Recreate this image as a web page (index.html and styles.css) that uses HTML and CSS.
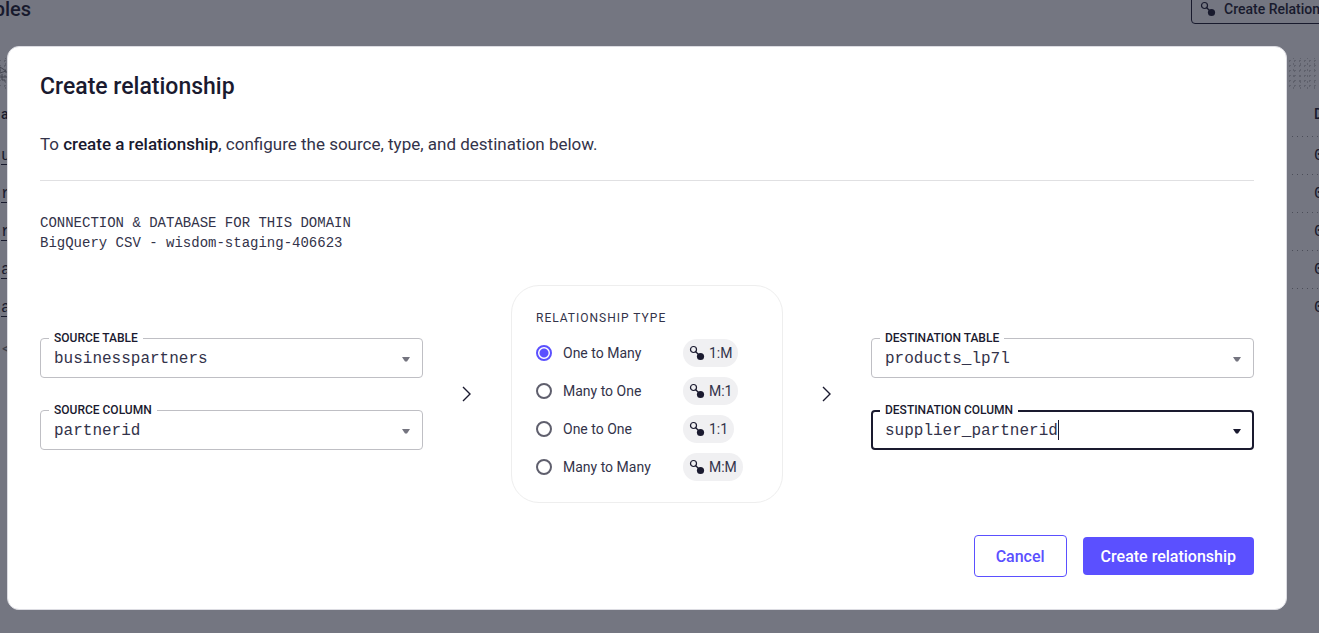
FILE: index.html
```
<!DOCTYPE html>
<html lang="en">

<head>
    <meta charset="UTF-8" />
    <meta name="viewport" content="width=device-width, initial-scale=1.0" />
    <title>Create relationship</title>
    <link rel="stylesheet" href="styles.css">
</head>

<body>
    <svg class="sprite" aria-hidden="true">
        <symbol id="icon-link" viewBox="0 0 16 16">
            <circle cx="4.5" cy="4.5" r="3" fill="none" stroke="currentColor" stroke-width="1.2" />
            <path d="M6.5 6.5l4 4" stroke="currentColor" stroke-width="1.2" />
            <circle cx="11.5" cy="11.5" r="3.6" fill="currentColor" />
        </symbol>
        <symbol id="icon-chevron" viewBox="0 0 10 16">
            <path d="M1 1l7 7-7 7" fill="none" stroke="currentColor" stroke-width="1.4" />
        </symbol>
        <symbol id="icon-arrow" viewBox="0 0 8 5">
            <path d="M0 0h8L5 4.5H3z" fill="currentColor" />
        </symbol>
    </svg>

    <div class="page">
        <header class="page-header">
            <h2>Tables</h2>
            <button type="button" class="page-button">
                <svg class="icon"><use href="#icon-link" /></svg>Create Relationship
            </button>
        </header>
        <div class="band">
            <svg class="band-icon" viewBox="0 0 12 16"><path d="M1 1v6l6-2zM7 5v2M1 11h8M3 8v6h3" /></svg>
        </div>
        <table class="tables">
            <thead>
                <tr><th>a</th><th class="count">D</th></tr>
            </thead>
            <tbody>
                <tr><td><a href="#">u</a></td><td class="count">0</td></tr>
                <tr><td><a href="#">r</a></td><td class="count">0</td></tr>
                <tr><td><a href="#">r</a></td><td class="count">0</td></tr>
                <tr><td><a href="#">a</a></td><td class="count">0</td></tr>
                <tr><td><a href="#">a</a></td><td class="count">0</td></tr>
            </tbody>
        </table>
        <div class="pager">&lt;</div>
    </div>

    <div class="overlay">
        <form class="dialog" role="dialog" aria-labelledby="dialog-title">
            <h1 id="dialog-title">Create relationship</h1>
            <p class="intro">To <strong>create a relationship</strong>, configure the source, type, and destination below.</p>
            <div class="connection">
                <div>CONNECTION &amp; DATABASE FOR THIS DOMAIN</div>
                <div>BigQuery CSV - wisdom-staging-406623</div>
            </div>

            <div class="builder">
                <div class="fields">
                    <div class="field">
                        <label for="source-table">SOURCE TABLE</label>
                        <select id="source-table"><option>businesspartners</option></select>
                        <svg class="arrow"><use href="#icon-arrow" /></svg>
                    </div>
                    <div class="field">
                        <label for="source-column">SOURCE COLUMN</label>
                        <select id="source-column"><option>partnerid</option></select>
                        <svg class="arrow"><use href="#icon-arrow" /></svg>
                    </div>
                </div>

                <svg class="chevron"><use href="#icon-chevron" /></svg>

                <fieldset class="types" aria-labelledby="types-title">
                    <div class="types-title" id="types-title">RELATIONSHIP TYPE</div>
                    <label class="type">
                        <input type="radio" name="type" checked>
                        <span class="type-name">One to Many</span>
                        <span class="chip"><svg class="icon"><use href="#icon-link" /></svg>1:M</span>
                    </label>
                    <label class="type">
                        <input type="radio" name="type">
                        <span class="type-name">Many to One</span>
                        <span class="chip"><svg class="icon"><use href="#icon-link" /></svg>M:1</span>
                    </label>
                    <label class="type">
                        <input type="radio" name="type">
                        <span class="type-name">One to One</span>
                        <span class="chip"><svg class="icon"><use href="#icon-link" /></svg>1:1</span>
                    </label>
                    <label class="type">
                        <input type="radio" name="type">
                        <span class="type-name">Many to Many</span>
                        <span class="chip"><svg class="icon"><use href="#icon-link" /></svg>M:M</span>
                    </label>
                </fieldset>

                <svg class="chevron"><use href="#icon-chevron" /></svg>

                <div class="fields">
                    <div class="field">
                        <label for="destination-table">DESTINATION TABLE</label>
                        <select id="destination-table"><option>products_lp7l</option></select>
                        <svg class="arrow"><use href="#icon-arrow" /></svg>
                    </div>
                    <div class="field active">
                        <label for="destination-column">DESTINATION COLUMN</label>
                        <input type="text" role="combobox" aria-expanded="false" id="destination-column" value="supplier_partnerid">
                        <span class="caret"></span>
                        <svg class="arrow"><use href="#icon-arrow" /></svg>
                    </div>
                </div>
            </div>

            <div class="actions">
                <button type="button" class="cancel">Cancel</button>
                <button type="submit" class="create">Create relationship</button>
            </div>
        </form>
    </div>
</body>

</html>
```
FILE: styles.css
```
* {
    box-sizing: border-box;
}

body {
    margin: 0;
    overflow: hidden;
    color: #1a1a2f;
    background: #fff;
    font-family: Roboto, "Liberation Sans", sans-serif;
    font-size: 16px;
    line-height: 20px;
}

h1,
h2,
p {
    margin: 0;
    font-weight: 500;
}

.sprite {
    display: none;
}

.icon {
    width: 16px;
    height: 16px;
    flex: none;
}

/* page under the dialog */
.page {
    margin: -12px -48px 0 -28px;
}

.page-header {
    display: flex;
    justify-content: space-between;
    align-items: center;
    height: 36px;
    margin-bottom: 34px;
}

.page-header h2 {
    padding-top: 6px;
    font-size: 20px;
}

.page-button {
    display: flex;
    align-items: center;
    gap: 8px;
    width: 176px;
    height: 36px;
    padding: 6px 8px 0;
    border: 1px solid #1a1a2f;
    border-radius: 4px;
    background: none;
    color: inherit;
    font: 500 14px Roboto, sans-serif;
    white-space: nowrap;
}

.band {
    height: 32px;
    padding: 8px 0 0 27px;
    background-image: radial-gradient(circle, #aaa 1px, transparent 1px), radial-gradient(circle, #aaa 1px, transparent 1px);
    background-size: 5px 5px, 7px 6px;
    background-position: 0 0, 2px 3px;
    opacity: 0.6;
}

.band-icon {
    display: block;
    width: 12px;
    height: 16px;
    fill: none;
    stroke: #333;
}

.tables {
    width: 100%;
    border-collapse: collapse;
    table-layout: fixed;
}

.tables th,
.tables td {
    height: 38px;
    padding: 0 0 0 29px;
    text-align: left;
    font-family: "Liberation Mono", monospace;
    font-weight: 400;
}

.tables th {
    height: 47px;
    font: 500 14px Roboto, sans-serif;
}

.tables .count {
    width: 77px;
    padding-left: 24px;
    background: repeating-linear-gradient(90deg, transparent 0 2px, #999 2px 3px, transparent 3px 5px) left bottom / 30px 1px no-repeat;
}

.tables tr:last-child td {
    background: none;
}

.tables a {
    color: inherit;
    text-underline-offset: 4px;
}

.pager {
    padding: 12px 0 0 30px;
    color: #777;
}

/* dialog */
.overlay {
    position: fixed;
    inset: 0;
    padding: 46px 32px 23px 7px;
    background: rgba(23, 27, 45, 0.6);
}

.dialog {
    padding: 24px 32px 32px;
    border: 1px solid #dcdce2;
    border-radius: 12px;
    background: #fff;
}

.dialog h1 {
    font-size: 23px;
    line-height: 32px;
}

.intro {
    padding: 31px 0 26px;
    border-bottom: 1px solid #e0e0e2;
    font-size: 17px;
    font-weight: 400;
    color: #33334a;
}

.intro strong {
    font-weight: 500;
    color: #1a1a2f;
}

.connection {
    padding: 32px 0;
    font: 14px/20px "Liberation Mono", monospace;
    color: #33334a;
}

.builder {
    display: flex;
    align-items: center;
}

.fields {
    flex: 1;
    display: grid;
    gap: 32px;
}

.field {
    position: relative;
}

.field label {
    position: absolute;
    top: -8px;
    left: 9px;
    padding: 0 5px;
    background: #fff;
    font-size: 12px;
    font-weight: 500;
    line-height: 16px;
}

.field select,
.field input {
    display: block;
    width: 100%;
    height: 40px;
    padding: 2px 13px 0;
    border: 1px solid #bfbfc4;
    border-radius: 4px;
    outline: none;
    appearance: none;
    background: #fff;
    color: #33334a;
    font: 16px "Liberation Mono", monospace;
}

.field.active input {
    padding: 2px 12px 0;
    border: 2px solid #1a1a2f;
    caret-color: transparent;
}

.caret {
    position: absolute;
    top: 10px;
    left: calc(14px + 18ch);
    width: 1px;
    height: 20px;
    background: #1a1a2f;
    font: 16px "Liberation Mono", monospace;
}

.arrow {
    position: absolute;
    top: 19px;
    right: 13px;
    width: 8px;
    height: 5px;
    color: #74747f;
    pointer-events: none;
}

.active .arrow {
    color: #1a1a2f;
}

.chevron {
    flex: none;
    width: 10px;
    height: 16px;
    margin: 0 39px;
}

.types {
    width: 272px;
    margin: 0;
    padding: 22px 24px 16px;
    border: 1px solid #eee;
    border-radius: 28px;
}

.types-title {
    margin-bottom: 6px;
    font-size: 12px;
    letter-spacing: 1px;
    color: #33334a;
}

.type {
    display: flex;
    align-items: center;
    height: 38px;
    color: #33334a;
}

.type input {
    appearance: none;
    width: 16px;
    height: 16px;
    margin: 0 11px 0 0;
    border: 2px solid #5f5f6d;
    border-radius: 50%;
}

.type input:checked {
    border-color: #5b50ff;
    background: radial-gradient(circle, #5b50ff 4px, #fff 5px);
}

.type-name {
    width: 120px;
    font-size: 14px;
}

.chip {
    display: flex;
    align-items: center;
    gap: 4px;
    height: 28px;
    padding: 0 6px;
    border-radius: 14px;
    background: #f0f0f2;
    font-size: 14px;
}

.chip .icon {
    color: #1a1a2f;
}

.actions {
    display: flex;
    justify-content: flex-end;
    align-items: center;
    gap: 16px;
    padding-top: 32px;
}

.actions button {
    height: 38px;
    padding: 0 18px;
    border: 0;
    border-radius: 4px;
    background: #5b50ff;
    color: #fff;
    font: 500 16px Roboto, sans-serif;
}

.actions .cancel {
    height: 42px;
    padding: 0 21px;
    border: 1px solid #5b50ff;
    background: #fff;
    color: #5b50ff;
}
```
